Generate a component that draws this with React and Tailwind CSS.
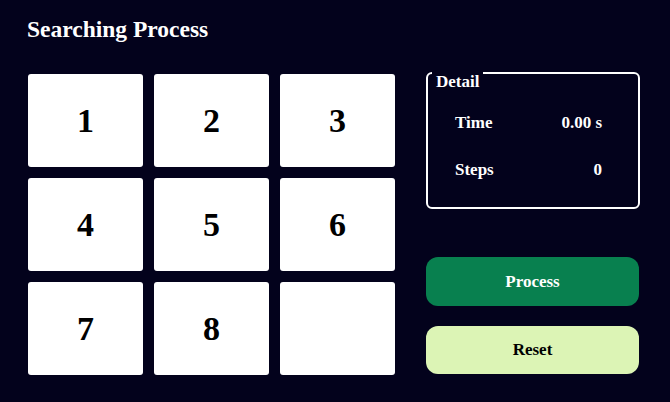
import React from "react";

const tiles = [1, 2, 3, 4, 5, 6, 7, 8, null];

const App = () => {
  return (
    <div className="min-h-screen bg-[#03021c] pl-[28px] pt-[15px] font-['Liberation_Serif',serif] font-bold">
      <h1 className="-ml-[1px] text-[23.5px] leading-[28px] text-white">Searching Process</h1>

      <div className="mt-[31px] flex">
        {/* puzzle board */}
        <div className="grid grid-cols-[115px_115px_115px] grid-rows-[93px_93px_93px] gap-[11px]">
          {tiles.map((t, i) => (
            <div
              key={i}
              className="flex items-center justify-center rounded-[3px] bg-white text-[34px] text-black"
            >
              {t}
            </div>
          ))}
        </div>

        {/* side panel */}
        <div className="ml-[31px] -mt-[2px] flex w-[214px] flex-col">
          <div className="relative h-[137px] rounded-[6px] border-2 border-white pl-[27px] pr-[36px] pt-[37px] text-[17px] text-white">
            <span className="absolute left-[4px] top-[-2px] bg-[#03021c] px-[4px] leading-[20px]">
              Detail
            </span>
            <div className="flex flex-col gap-[23px]">
              <div className="flex h-[24px] items-center justify-between">
                <span>Time</span>
                <span>0.00 s</span>
              </div>
              <div className="flex h-[24px] items-center justify-between">
                <span>Steps</span>
                <span>0</span>
              </div>
            </div>
          </div>

          <button className="mt-[48px] h-[49px] w-[213px] rounded-[12px] bg-[#08804f] text-[17px] text-white">
            Process
          </button>
          <button className="mt-[20px] h-[48px] w-[213px] rounded-[12px] bg-[#dcf4b5] text-[17px] text-black">
            Reset
          </button>
        </div>
      </div>
    </div>
  );
};

export default App;
